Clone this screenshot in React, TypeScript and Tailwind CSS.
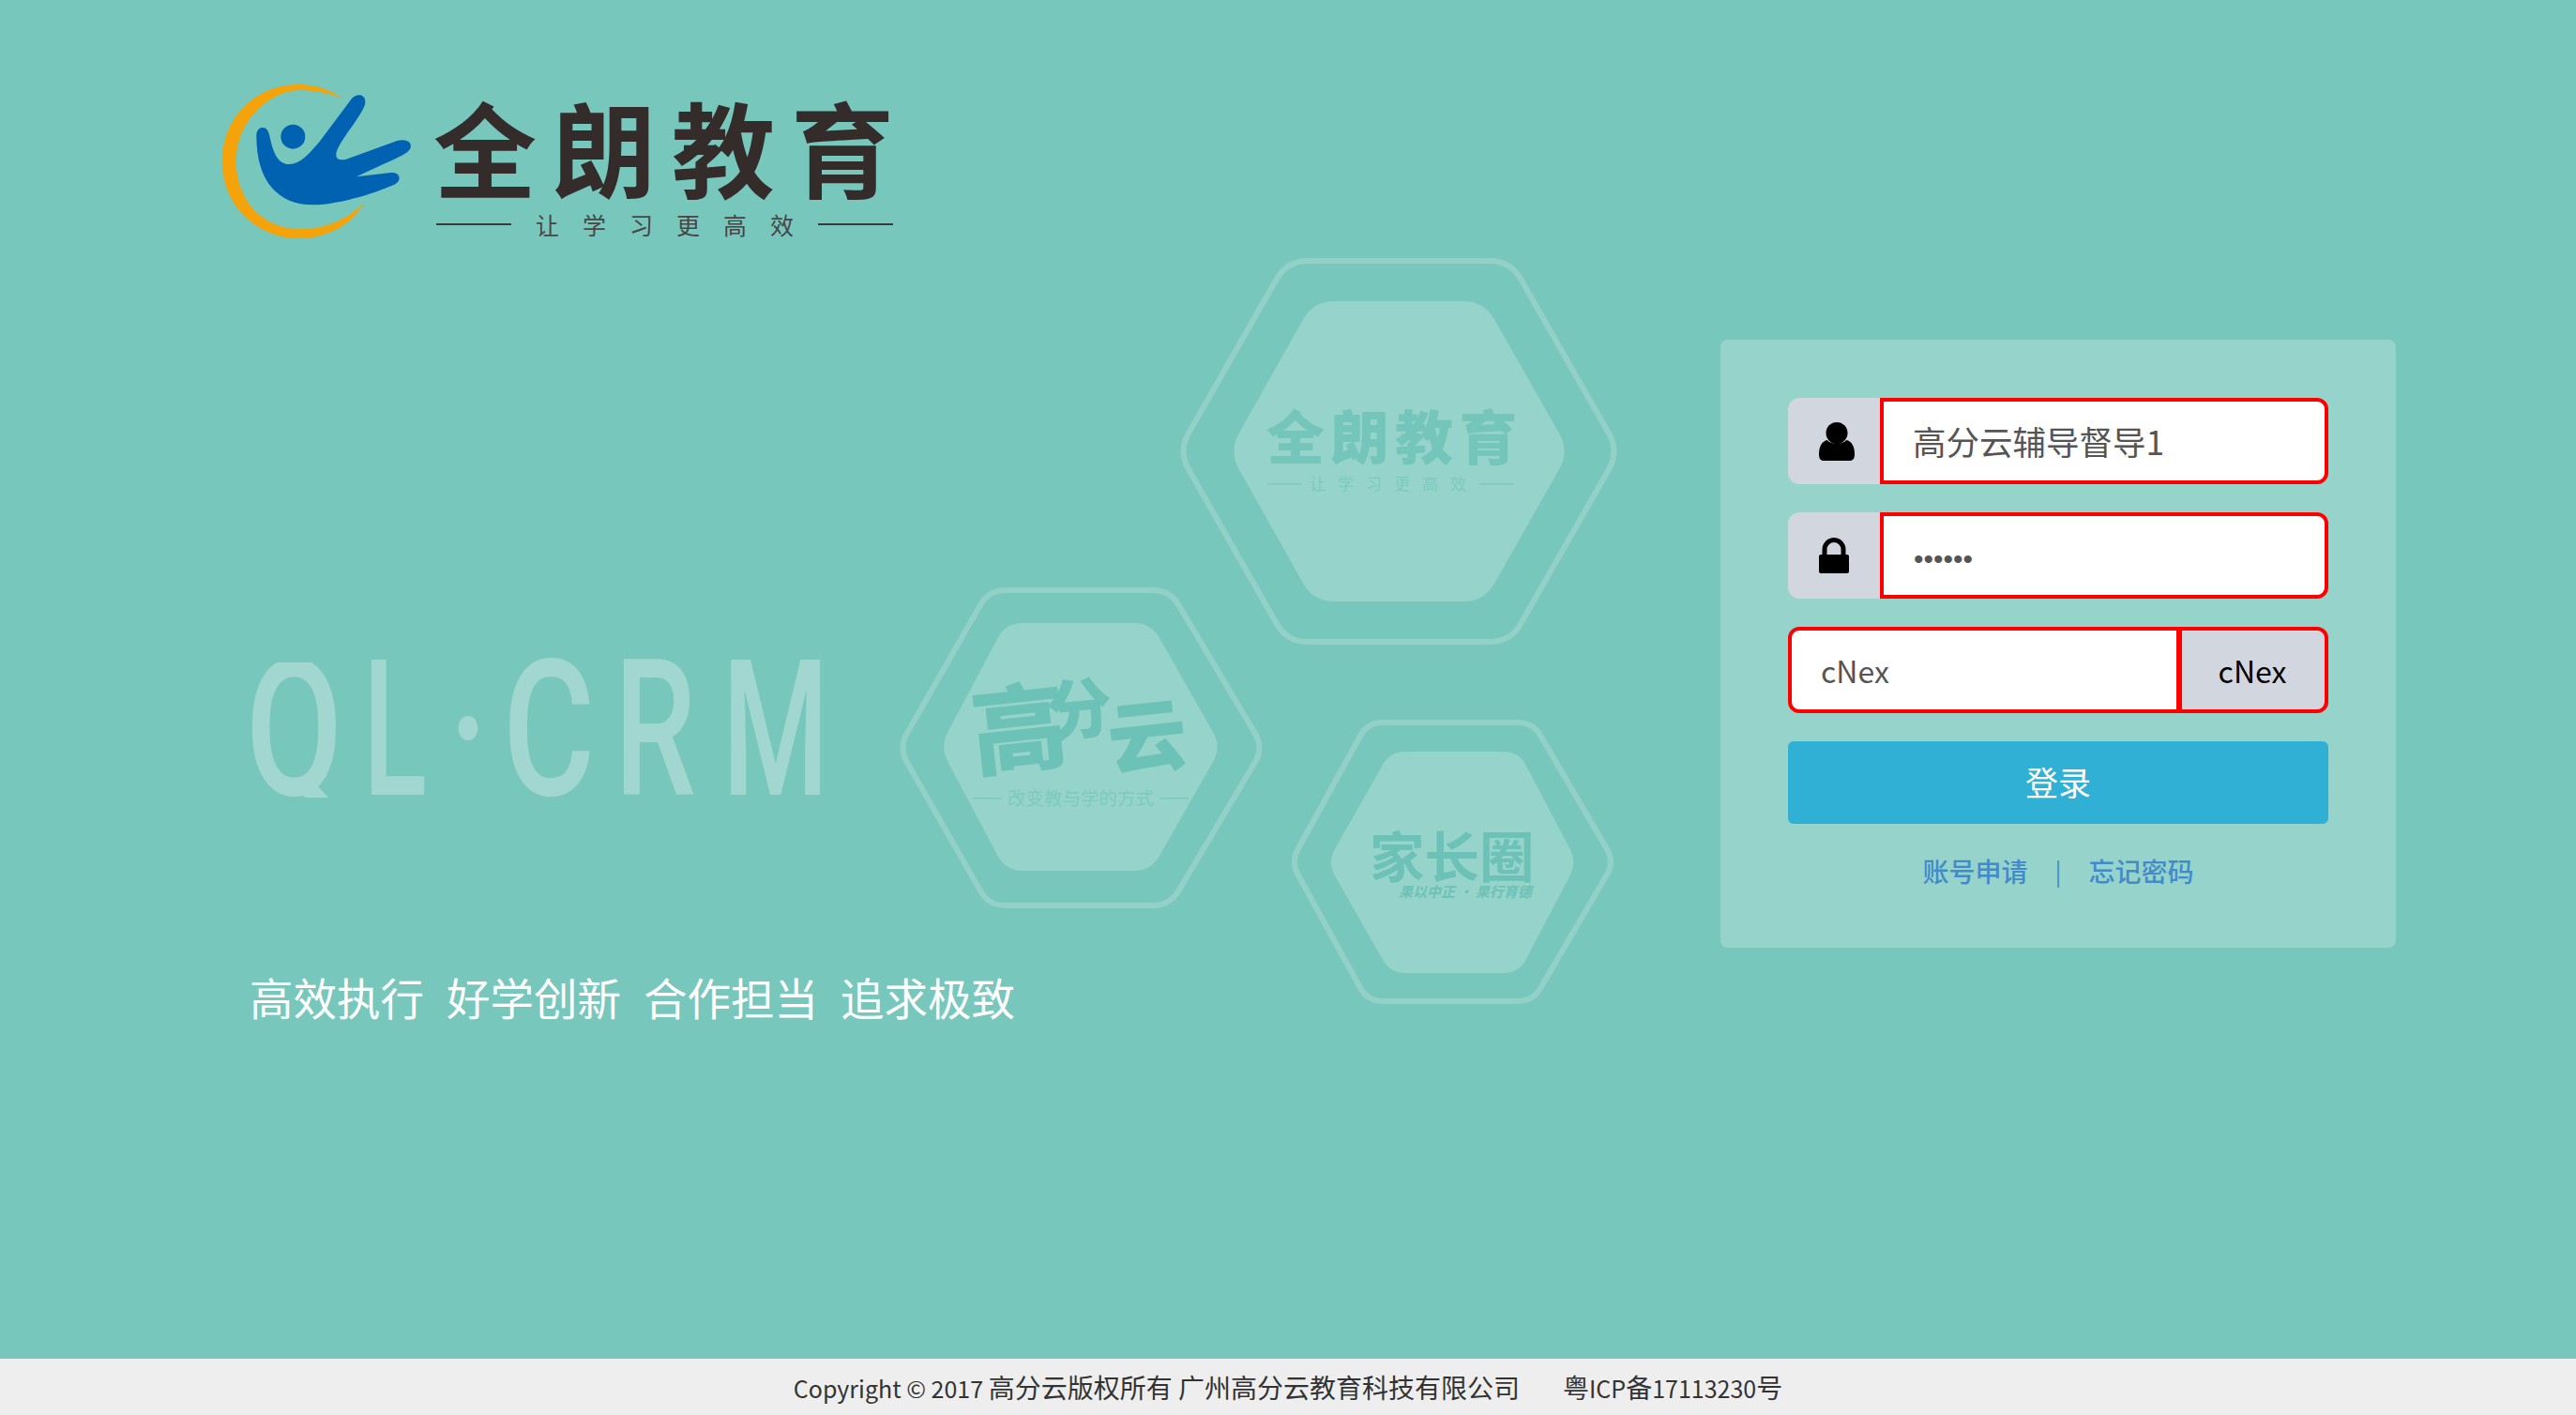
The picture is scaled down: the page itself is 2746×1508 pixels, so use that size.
import React from "react";

const cjk = "'Noto Sans CJK SC','Noto Sans',sans-serif";

// rounded hexagon, l/r are the side tips, x1/x2 the ends of the top edge
const hexPath = (
  l: number,
  r: number,
  t: number,
  b: number,
  x1: number,
  x2: number,
  c: number
) => {
  const m = (t + b) / 2;
  const pts = [
    [x1, t],
    [x2, t],
    [r, m],
    [x2, b],
    [x1, b],
    [l, m],
  ];
  let d = "";
  pts.forEach((p, i) => {
    const prev = pts[(i + 5) % 6];
    const next = pts[(i + 1) % 6];
    const d1 = Math.hypot(prev[0] - p[0], prev[1] - p[1]);
    const d2 = Math.hypot(next[0] - p[0], next[1] - p[1]);
    const a = [p[0] + ((prev[0] - p[0]) * c) / d1, p[1] + ((prev[1] - p[1]) * c) / d1];
    const e = [p[0] + ((next[0] - p[0]) * c) / d2, p[1] + ((next[1] - p[1]) * c) / d2];
    d += `${i === 0 ? "M" : "L"}${a[0]} ${a[1]} Q${p[0]} ${p[1]} ${e[0]} ${e[1]} `;
  });
  return d + "Z";
};

const Logo = () => (
  <svg viewBox="0 0 720 600" className="w-[240px] h-[200px] shrink-0">
    <path
      fill="#f5a30a"
      d="M435 105 C395 75 345 60 295 60 C155 60 50 170 50 305 C50 450 165 552 295 552 C385 552 465 510 505 437 C440 500 370 522 300 522 C180 522 95 430 95 305 C95 170 210 78 300 78 C350 78 400 90 435 105 Z"
    />
    <path
      fill="#0062b1"
      d="M160 225 C160 205 170 198 180 198 C192 198 198 208 202 224 C212 270 225 315 265 315 C300 315 330 280 360 245 L465 105 C480 88 510 88 508 120 C500 160 415 250 415 285 C415 300 430 303 445 300 L610 240 C640 232 660 245 652 265 C640 285 620 290 480 355 L590 342 C620 340 625 365 605 378 C560 400 430 445 340 445 C230 445 160 370 160 225 Z"
    />
    <circle cx="277" cy="227" r="39" fill="#0062b1" />
  </svg>
);

const UserIcon = () => (
  <svg viewBox="0 0 38 41" className="w-[38px] h-[41px]">
    <circle cx="19" cy="11.5" r="11.5" fill="#000" />
    <path
      fill="#000"
      d="M0 34 C0 26 3 20 9 19 C12 24 26 24 29 19 C35 20 38 26 38 34 C38 39 36 41 33 41 L5 41 C2 41 0 39 0 34 Z"
    />
  </svg>
);

const LockIcon = () => (
  <svg viewBox="0 0 32 38" className="w-[32px] h-[38px]">
    <rect x="0" y="18" width="32" height="20" rx="2" fill="#000" />
    <path d="M6 18 V12.5 a10 10 0 0 1 20 0 V18" fill="none" stroke="#000" strokeWidth="5" />
  </svg>
);

const Hexagons = () => {
  const line = "#93d1c8";
  const fill = "#96d3ca";
  const mark = "#74c5ba";
  const sub = "#7ccabf";
  return (
    <svg viewBox="952 275 778 800" className="w-[778px] h-[800px] shrink-0" fontFamily={cjk}>
      <path d={hexPath(1256, 1726, 278, 684, 1372, 1610, 22)} fill="none" stroke={line} strokeWidth="6" />
      <path d={hexPath(1310, 1673, 321, 641, 1400, 1582, 22)} fill={fill} />
      <text x="1350" y="490" fontSize="62" fontWeight="900" letterSpacing="6.5" fill={mark}>
        全朗教育
      </text>
      <text x="1396" y="522" fontSize="17" letterSpacing="13" fill={sub}>
        让学习更高效
      </text>
      <rect x="1351" y="515" width="37" height="1.5" fill={sub} />
      <rect x="1577" y="515" width="37" height="1.5" fill={sub} />

      <path d={hexPath(958, 1347, 629, 965, 1054, 1247, 18)} fill="none" stroke={line} strokeWidth="6" />
      <path d={hexPath(1002, 1302, 664, 928, 1072, 1227, 18)} fill={fill} />
      <g fill="#6cc2b6" fontWeight="900" transform="rotate(-6 1150 780)">
        <text x="1036" y="808" fontSize="102">
          高
        </text>
        <text x="1118" y="782" fontSize="70">
          分
        </text>
        <text x="1180" y="824" fontSize="84">
          云
        </text>
      </g>
      <text x="1074" y="858" fontSize="19.5" fill={sub}>
        改变教与学的方式
      </text>
      <rect x="1037" y="850" width="31" height="1.5" fill={sub} />
      <rect x="1236" y="850" width="31" height="1.5" fill={sub} />

      <path d={hexPath(1376, 1721, 770, 1067, 1458, 1634, 16)} fill="none" stroke={line} strokeWidth="6" />
      <path d={hexPath(1415, 1681, 801, 1037, 1482, 1619, 16)} fill={fill} />
      <text x="1460" y="935" fontSize="58.5" fontWeight="700" fill="#6cc2b6">
        家长圈
      </text>
      <text x="1491" y="956" fontSize="15" fontWeight="700" fontStyle="italic" fill="#6cc2b6">
        果以中正 · 果行育德
      </text>
    </svg>
  );
};

const crmLetters = [
  { ch: "Q", cls: "w-[125px] overflow-hidden", scale: "scale-x-[.74]" },
  { ch: "L", cls: "w-[91px]", scale: "scale-x-[.62]" },
  { ch: "·", cls: "w-[58px] font-bold", scale: "scale-x-[.74]" },
  { ch: "C", cls: "w-[119px]", scale: "scale-x-[.74]" },
  { ch: "R", cls: "w-[115px]", scale: "scale-x-[.68]" },
  { ch: "M", cls: "w-[110px]", scale: "scale-x-[.64]" },
];

const App = () => {
  return (
    <div className="w-full h-[1508px] flex flex-col overflow-hidden bg-[#78c7bc] font-['Noto_Sans_CJK_SC','Noto_Sans',sans-serif]">
      <div className="flex-1">
        <div className="flex pt-[70px] pl-[220px]">
          <Logo />
          <div className="ml-[5px] pt-[27px] w-[487px] text-[#332c2b]">
            <div className="text-[110px] leading-[116px] font-bold tracking-[17px] whitespace-nowrap -ml-[3px]">全朗教育</div>
            <div className="flex items-center justify-between mt-[11px]">
              <div className="w-[80px] h-[2px] bg-[#3a3a3a]" />
              <div className="text-[25px] leading-[30px] tracking-[25px] text-[#4a4545] -mr-[25px]">让学习更高效</div>
              <div className="w-[80px] h-[2px] bg-[#3a3a3a]" />
            </div>
          </div>
        </div>

        <div className="flex pl-[269px] pt-[5px]">
          <div className="w-[683px] shrink-0 pt-[431px]">
            <div className="flex h-[144px] -ml-[7px]">
              {crmLetters.map((l) => (
                <div
                  key={l.ch}
                  className={`${l.cls} h-[144px] shrink-0 text-[203px] leading-[144px] font-medium text-[#a2d6d0] font-['Roboto',sans-serif]`}
                >
                  <span className={`inline-block origin-left ${l.scale}`}>{l.ch}</span>
                </div>
              ))}
            </div>
            <div className="flex gap-[24px] mt-[182px] -ml-[3px] text-[46.5px] leading-[60px] text-white whitespace-nowrap">
              <span>高效执行</span>
              <span>好学创新</span>
              <span>合作担当</span>
              <span>追求极致</span>
            </div>
          </div>

          <Hexagons />

          <div className="ml-[104px] mt-[87px] w-[720px] h-[648px] shrink-0 rounded-lg bg-[#96d3ca] px-[72px] pt-[62px]">
            <div className="flex h-[92px]">
              <div className="w-[98px] flex items-center justify-center rounded-l-xl bg-[#d2d6de] pl-[6px]">
                <UserIcon />
              </div>
              <input
                readOnly
                defaultValue="高分云辅导督导1"
                className="flex-1 min-w-0 rounded-r-xl border-4 border-[#f00] bg-white pl-[31px] text-[35.5px] text-[#555] outline-none"
              />
            </div>
            <div className="flex h-[92px] mt-[30px]">
              <div className="w-[98px] flex items-center justify-center rounded-l-xl bg-[#d2d6de]">
                <LockIcon />
              </div>
              <input
                readOnly
                type="password"
                defaultValue="123456"
                className="flex-1 min-w-0 rounded-r-xl border-4 border-[#f00] bg-white pl-[32px] pt-[6px] text-[30px] text-[#555] outline-none font-['Liberation_Sans',sans-serif]"
              />
            </div>
            <div className="flex h-[92px] mt-[30px]">
              <input
                readOnly
                defaultValue="cNex"
                className="w-[417px] min-w-0 rounded-l-xl border-4 border-r-[3px] border-[#f00] bg-white pl-[31px] text-[32px] text-[#555] outline-none"
              />
              <div className="flex-1 flex items-center justify-center rounded-r-xl border-4 border-l-[3px] border-[#f00] bg-[#d2d6de] pr-[2px] text-[32px] text-black">
                cNex
              </div>
            </div>
            <button className="w-full h-[88px] mt-[30px] pb-[2px] rounded-md bg-[#31b0d5] text-[35px] text-white">登录</button>
            <div className="flex justify-center items-center mt-[25px] text-[28px] leading-[50px] font-medium text-[#428bca]">
              <span>账号申请</span>
              <span className="mx-[29px] text-[26px] font-normal">|</span>
              <span>忘记密码</span>
            </div>
          </div>
        </div>
      </div>

      <footer className="h-[60px] shrink-0 flex items-center justify-center bg-[#eeeeee] text-[28px] text-[#333] whitespace-pre">
        <span>
          <span className="text-[25px]">Copyright © 2017 </span>高分云版权所有 广州高分云教育科技有限公司
        </span>
        <span className="ml-[46px]">
          粤<span className="text-[25px]">ICP</span>备<span className="text-[25px]">17113230</span>号
        </span>
      </footer>
    </div>
  );
};

export default App;
